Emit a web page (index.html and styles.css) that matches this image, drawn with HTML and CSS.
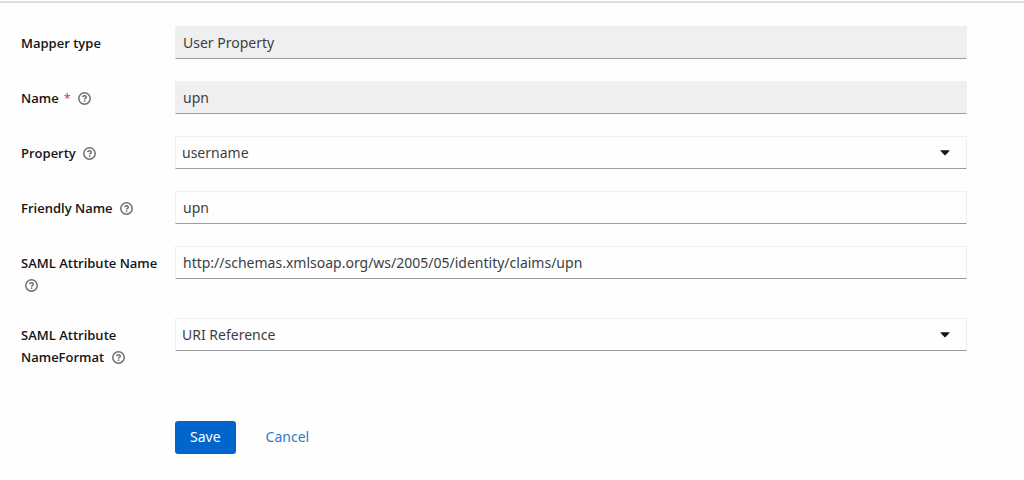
FILE: index.html
```html
<!DOCTYPE html>
<html lang="en">
<head>
<meta charset="utf-8">
<meta name="viewport" content="width=device-width, initial-scale=1">
<title>User Property</title>
<link rel="stylesheet" href="styles.css">
</head>
<body>
<svg class="sprite" aria-hidden="true">
  <symbol id="help" viewBox="0 0 13 13">
    <circle cx="6.5" cy="6.5" r="5.7" fill="none" stroke="currentColor" stroke-width="1.5"/>
    <path d="M4.6 5.2C4.8 4.2 5.5 3.7 6.5 3.7c1 0 1.8.6 1.8 1.5 0 1.1-1.7 1.1-1.7 2.2" fill="none" stroke="currentColor" stroke-width="1.5"/>
    <circle cx="6.6" cy="9.1" r=".9" fill="currentColor"/>
  </symbol>
</svg>
<main class="panel">
  <form class="form">
    <div class="row">
      <div class="row-label"><label for="mapper-type">Mapper type</label></div>
      <input class="control" id="mapper-type" type="text" value="User Property" readonly>
    </div>
    <div class="row">
      <div class="row-label"><label for="name">Name <span class="required">*</span></label> <button class="help" type="button" aria-label="Help for Name"><svg><use href="#help"/></svg></button></div>
      <input class="control" id="name" type="text" value="upn" readonly>
    </div>
    <div class="row">
      <div class="row-label"><label for="property">Property</label> <button class="help" type="button" aria-label="Help for Property"><svg><use href="#help"/></svg></button></div>
      <div class="select-wrap">
        <select class="control select" id="property"><option>username</option></select>
        <svg class="caret" viewBox="0 0 10 6" aria-hidden="true"><path d="M1 .3h8q1 0 .4.8L5.6 5q-.6.6-1.2 0L.6 1.1Q0 .3 1 .3z"/></svg>
      </div>
    </div>
    <div class="row">
      <div class="row-label"><label for="friendly-name">Friendly Name</label> <button class="help" type="button" aria-label="Help for Friendly Name"><svg><use href="#help"/></svg></button></div>
      <input class="control" id="friendly-name" type="text" value="upn">
    </div>
    <div class="row">
      <div class="row-label"><label for="attribute-name">SAML Attribute Name</label> <button class="help" type="button" aria-label="Help for SAML Attribute Name"><svg><use href="#help"/></svg></button></div>
      <input class="control" id="attribute-name" type="text" value="http://schemas.xmlsoap.org/ws/2005/05/identity/claims/upn">
    </div>
    <div class="row">
      <div class="row-label"><label for="name-format">SAML Attribute NameFormat</label> <button class="help" type="button" aria-label="Help for SAML Attribute NameFormat"><svg><use href="#help"/></svg></button></div>
      <div class="select-wrap">
        <select class="control select" id="name-format"><option>URI Reference</option></select>
        <svg class="caret" viewBox="0 0 10 6" aria-hidden="true"><path d="M1 .3h8q1 0 .4.8L5.6 5q-.6.6-1.2 0L.6 1.1Q0 .3 1 .3z"/></svg>
      </div>
    </div>
    <div class="row">
      <div class="actions">
        <button class="button primary" type="button">Save</button>
        <button class="button link" type="button">Cancel</button>
      </div>
    </div>
  </form>
</main>
</body>
</html>
```
FILE: styles.css
```css
* {
  box-sizing: border-box;
}

body {
  margin: 0;
  background: #fefefe;
  color: #151515;
  font-family: "Noto Sans", sans-serif;
  font-size: 14px;
  line-height: 22px;
}

.sprite {
  position: absolute;
  width: 0;
  height: 0;
}

.panel {
  margin-top: 1px;
  border-top: 2px solid #dedede;
  padding: 23px 57px 24px 21px;
}

.form {
  display: flex;
  flex-direction: column;
  gap: 22px;
}

.row {
  display: grid;
  grid-template-columns: 138px minmax(0, 1fr);
  column-gap: 16px;
  align-items: start;
}

.row-label {
  padding-top: 6px;
  font-family: "Open Sans", "Noto Sans", sans-serif;
  font-size: 13px;
  font-weight: 600;
}

.required {
  margin-left: 2px;
  color: #d0503f;
  font-size: 12px;
}

.help {
  display: inline-flex;
  padding: 0 4px;
  border: 0;
  background: none;
  color: #6a6e73;
  vertical-align: -2px;
}

.help svg {
  width: 13px;
  height: 13px;
}

.control {
  display: block;
  width: 100%;
  height: 33px;
  padding: 0 7px;
  border: 1px solid #f0f0f0;
  border-bottom-color: #9a9c9e;
  border-radius: 0;
  background: #fefefe;
  color: #3c3f42;
  font: inherit;
}

.control:read-only:not(select) {
  background: #efefef;
}

.select-wrap {
  position: relative;
}

.select {
  padding: 0 32px 0 6px;
  appearance: none;
}

.caret {
  position: absolute;
  top: 14px;
  right: 17px;
  width: 10px;
  height: 6px;
  fill: #151515;
  pointer-events: none;
}

.actions {
  grid-column: 2;
  display: flex;
  gap: 15px;
  padding-top: 31px;
}

.button {
  padding: 5px 15px 6px;
  border: 0;
  border-radius: 3px;
  font: inherit;
}

.primary {
  background: #0066cc;
  color: #fff;
}

.link {
  background: none;
  color: #2b7bc9;
}
```
